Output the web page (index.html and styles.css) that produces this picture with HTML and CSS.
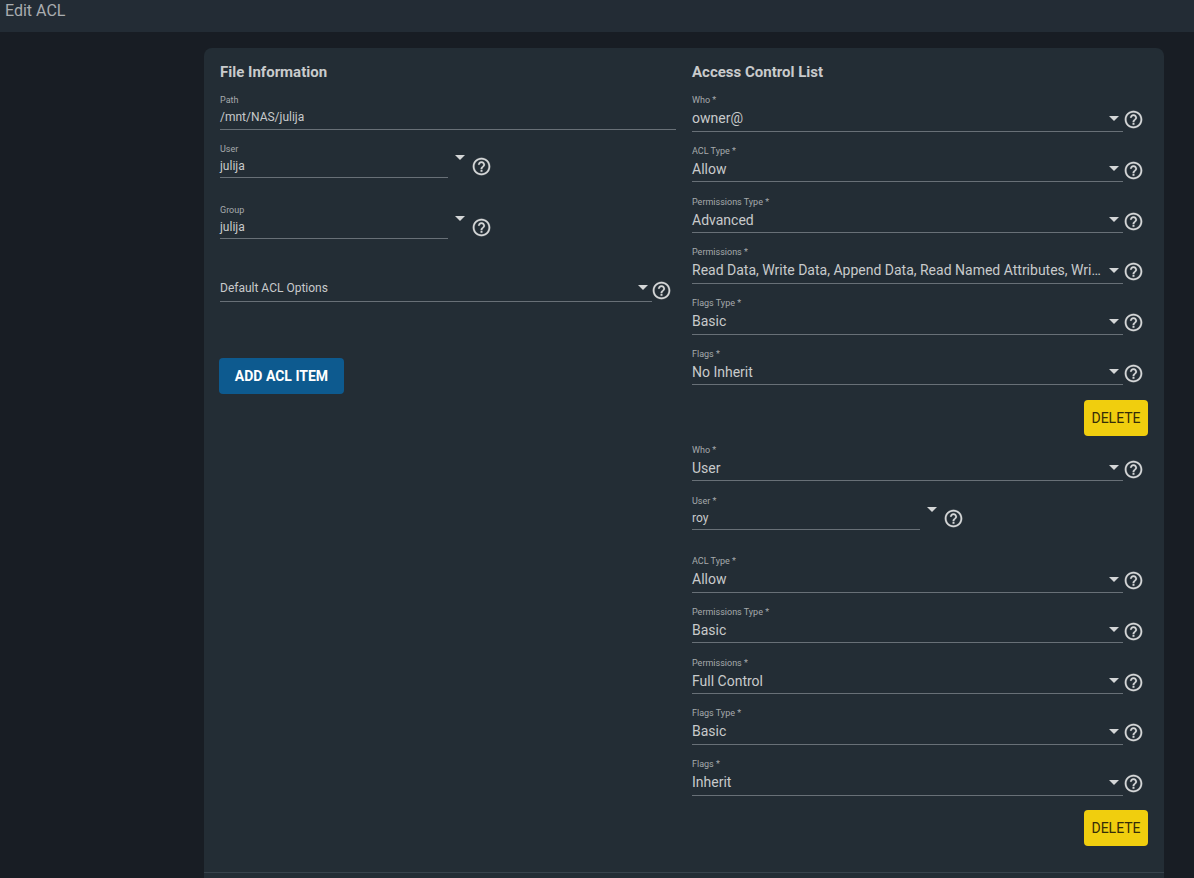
FILE: index.html
```html
<!DOCTYPE html>
<html lang="en">
<head>
    <meta charset="UTF-8">
    <title>Edit ACL</title>
    <link rel="stylesheet" href="styles.css">
</head>
<body>
    <svg class="sprite" width="0" height="0">
        <symbol id="help" viewBox="0 0 24 24">
            <path d="M11 18h2v-2h-2v2zm1-16C6.48 2 2 6.48 2 12s4.48 10 10 10 10-4.48 10-10S17.52 2 12 2zm0 18c-4.41 0-8-3.59-8-8s3.59-8 8-8 8 3.59 8 8-3.59 8-8 8zm0-14c-2.21 0-4 1.79-4 4h2c0-1.1.9-2 2-2s2 .9 2 2c0 2-3 1.75-3 5h2c0-2.25 3-2.5 3-5 0-2.21-1.79-4-4-4z"/>
        </symbol>
    </svg>

    <header class="topbar">Edit ACL</header>

    <main class="card">
        <div class="columns">
            <section class="col">
                <h2>File Information</h2>

                <div class="path-field">
                    <div class="label">Path</div>
                    <div class="value">/mnt/NAS/julija</div>
                </div>

                <div class="combo user-combo">
                    <div class="combo-box">
                        <div class="label">User</div>
                        <div class="value">julija</div>
                    </div>
                    <span class="arrow"></span>
                    <svg class="help"><use href="#help"/></svg>
                </div>

                <div class="combo group-combo">
                    <div class="combo-box">
                        <div class="label">Group</div>
                        <div class="value">julija</div>
                    </div>
                    <span class="arrow"></span>
                    <svg class="help"><use href="#help"/></svg>
                </div>

                <div class="default-acl">
                    <div class="select-line">
                        <span class="text">Default ACL Options</span>
                        <span class="arrow"></span>
                    </div>
                    <svg class="help"><use href="#help"/></svg>
                </div>

                <button class="btn-add">ADD ACL ITEM</button>
            </section>

            <section class="col">
                <h2>Access Control List</h2>

                <div class="field">
                    <div class="field-main"><div class="label">Who *</div><div class="select-line"><span class="text">owner@</span><span class="arrow"></span></div></div>
                    <svg class="help"><use href="#help"/></svg>
                </div>
                <div class="field">
                    <div class="field-main"><div class="label">ACL Type *</div><div class="select-line"><span class="text">Allow</span><span class="arrow"></span></div></div>
                    <svg class="help"><use href="#help"/></svg>
                </div>
                <div class="field">
                    <div class="field-main"><div class="label">Permissions Type *</div><div class="select-line"><span class="text">Advanced</span><span class="arrow"></span></div></div>
                    <svg class="help"><use href="#help"/></svg>
                </div>
                <div class="field">
                    <div class="field-main"><div class="label">Permissions *</div><div class="select-line"><span class="text">Read Data, Write Data, Append Data, Read Named Attributes, Wri…</span><span class="arrow"></span></div></div>
                    <svg class="help"><use href="#help"/></svg>
                </div>
                <div class="field">
                    <div class="field-main"><div class="label">Flags Type *</div><div class="select-line"><span class="text">Basic</span><span class="arrow"></span></div></div>
                    <svg class="help"><use href="#help"/></svg>
                </div>
                <div class="field">
                    <div class="field-main"><div class="label">Flags *</div><div class="select-line"><span class="text">No Inherit</span><span class="arrow"></span></div></div>
                    <svg class="help"><use href="#help"/></svg>
                </div>
                <div class="item-actions"><button class="btn-delete">DELETE</button></div>

                <div class="field">
                    <div class="field-main"><div class="label">Who *</div><div class="select-line"><span class="text">User</span><span class="arrow"></span></div></div>
                    <svg class="help"><use href="#help"/></svg>
                </div>
                <div class="combo acl-user-combo">
                    <div class="combo-box">
                        <div class="label">User *</div>
                        <div class="value">roy</div>
                    </div>
                    <span class="arrow"></span>
                    <svg class="help"><use href="#help"/></svg>
                </div>
                <div class="field">
                    <div class="field-main"><div class="label">ACL Type *</div><div class="select-line"><span class="text">Allow</span><span class="arrow"></span></div></div>
                    <svg class="help"><use href="#help"/></svg>
                </div>
                <div class="field">
                    <div class="field-main"><div class="label">Permissions Type *</div><div class="select-line"><span class="text">Basic</span><span class="arrow"></span></div></div>
                    <svg class="help"><use href="#help"/></svg>
                </div>
                <div class="field">
                    <div class="field-main"><div class="label">Permissions *</div><div class="select-line"><span class="text">Full Control</span><span class="arrow"></span></div></div>
                    <svg class="help"><use href="#help"/></svg>
                </div>
                <div class="field">
                    <div class="field-main"><div class="label">Flags Type *</div><div class="select-line"><span class="text">Basic</span><span class="arrow"></span></div></div>
                    <svg class="help"><use href="#help"/></svg>
                </div>
                <div class="field">
                    <div class="field-main"><div class="label">Flags *</div><div class="select-line"><span class="text">Inherit</span><span class="arrow"></span></div></div>
                    <svg class="help"><use href="#help"/></svg>
                </div>
                <div class="item-actions"><button class="btn-delete">DELETE</button></div>
            </section>
        </div>
        <div class="card-footer"></div>
    </main>
</body>
</html>
```

FILE: styles.css
```css
html, body {
    height: 100%;
    overflow: hidden;
}
body {
    margin: 0;
    background-color: #181d24;
    color: #c8cacb;
    font-family: Roboto, "Liberation Sans", sans-serif;
}
.sprite {
    display: block;
    height: 0;
}
.topbar {
    height: 32px;
    box-sizing: border-box;
    padding-left: 5px;
    background-color: #232c35;
    color: #a9adb0;
    font-size: 16px;
    line-height: 22px;
}
.card {
    width: 960px;
    margin: 16px 0 0 204px;
    background-color: #232d35;
    border-radius: 8px 8px 0 0;
}
.columns {
    display: flex;
    gap: 16px;
    padding: 16px 16px 18px;
}
.col {
    width: 456px;
}
h2 {
    margin: 0 0 14px;
    font-size: 15px;
    line-height: 16px;
    font-weight: 700;
    color: #c9cbcc;
}
.label {
    height: 12px;
    font-size: 9px;
    line-height: 12px;
    color: #a6aaac;
}
.value {
    padding-top: 1px;
    font-size: 12px;
    line-height: 20px;
}
.arrow {
    flex: none;
    width: 0;
    height: 0;
    border-left: 5.5px solid transparent;
    border-right: 5.5px solid transparent;
    border-top: 5px solid #d4d6d7;
}
.help {
    flex: none;
    width: 21px;
    height: 21px;
    fill: #d4d6d7;
    stroke: #d4d6d7;
    stroke-width: 0.2;
}

/* left column */
.path-field {
    height: 36px;
    margin-bottom: 13px;
    border-bottom: 1px solid #687077;
    box-sizing: border-box;
}
.combo {
    display: flex;
    width: 272px;
    align-items: flex-start;
}
.combo-box {
    width: 228px;
    height: 35px;
    box-sizing: border-box;
    border-bottom: 1px solid #687077;
}
.combo .arrow {
    margin: 12px 0 0 7px;
}
.combo .help {
    margin: 13px 0 0 6.5px;
}
.user-combo {
    height: 61px;
}
.group-combo {
    height: 61px;
}
.default-acl {
    display: flex;
    align-items: flex-end;
    width: 451px;
    margin-top: 7px;
}
.default-acl .select-line {
    flex: 1;
    height: 30px;
    padding-top: 3px;
    font-size: 12px;
}
.default-acl .help {
    margin: 0 -1px 1.5px -0.5px;
}
.btn-add {
    display: block;
    width: 125px;
    height: 36px;
    margin: 56px 0 0 -1px;
    padding: 0;
    border: none;
    border-radius: 4px;
    background-color: #0d5a8f;
    color: #fff;
    font-family: inherit;
    font-size: 14px;
    font-weight: 700;
}

/* right column */
.field {
    display: flex;
    align-items: flex-start;
    height: 50.8px;
}
.field-main {
    width: 431px;
}
.select-line {
    display: flex;
    align-items: center;
    height: 25.5px;
    box-sizing: border-box;
    padding: 0 4px 0.5px 0;
    border-bottom: 1px solid #687077;
    font-size: 14px;
}
.select-line .text {
    flex: 1;
    min-width: 0;
    white-space: nowrap;
    padding-right: 6px;
}
.field .help {
    margin: 15px 0 0 -0.5px;
}
.item-actions {
    display: flex;
    justify-content: flex-end;
    margin: 1px 0 8px;
}
.acl-user-combo {
    height: 60.5px;
}
.btn-delete {
    width: 64px;
    height: 36px;
    padding: 0;
    border: none;
    border-radius: 4px;
    background-color: #f0ce0e;
    color: #352c08;
    font-family: inherit;
    font-size: 14px;
    font-weight: 400;
}
.card-footer {
    height: 5px;
    border-top: 1px solid #38434c;
}
```
